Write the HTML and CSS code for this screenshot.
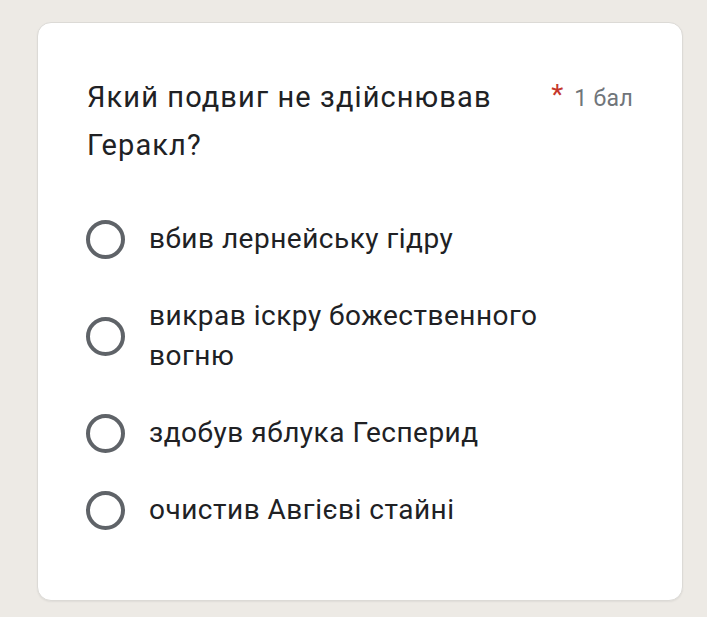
FILE: index.html
```html
<!DOCTYPE html>
<html lang="uk">
<head>
<meta charset="utf-8">
<link rel="stylesheet" href="styles.css">
</head>
<body>
<div class="card">
  <div class="header">
    <div class="title">Який подвиг не здійснював Геракл?</div>
    <div class="meta"><span class="req">*</span><span class="points">1 бал</span></div>
  </div>
  <div class="options">
    <label class="option"><span class="radio"></span><span class="text">вбив лернейську гідру</span></label>
    <label class="option"><span class="radio"></span><span class="text">викрав іскру божественного вогню</span></label>
    <label class="option"><span class="radio"></span><span class="text">здобув яблука Гесперид</span></label>
    <label class="option"><span class="radio"></span><span class="text">очистив Авгієві стайні</span></label>
  </div>
</div>
</body>
</html>
```
FILE: styles.css
```css
html, body {
  margin: 0;
  padding: 0;
  background: #edeae5;
  font-family: Roboto, "Noto Sans", sans-serif;
}
body {
  padding: 22px 24px 16px 37px;
}
.card {
  box-sizing: border-box;
  width: 646px;
  height: 579px;
  background: #fff;
  border: 1px solid #dcdad6;
  border-radius: 14px;
  box-shadow: 0 1px 2px rgba(0,0,0,0.06);
  padding: 50px 49px 0 48px;
}
.header {
  display: flex;
  align-items: flex-start;
}
.title {
  width: 440px;
  margin-left: 1px;
  font-size: 29px;
  letter-spacing: 1.1px;
  line-height: 48px;
  color: #202124;
}
.meta {
  margin-left: auto;
  display: flex;
  align-items: baseline;
  line-height: 48px;
}
.req {
  color: #c5372c;
  font-size: 28px;
  margin-right: 11px;
  position: relative;
  top: -2px;
}
.points {
  color: #70757a;
  font-size: 23px;
  letter-spacing: 0.3px;
}
.options {
  margin-top: 50px;
  display: flex;
  flex-direction: column;
  gap: 37px;
}
.option {
  display: flex;
  align-items: center;
}
.radio {
  flex: none;
  box-sizing: border-box;
  width: 39px;
  height: 39px;
  border: 4px solid #5f6368;
  border-radius: 50%;
  margin-right: 24px;
}
.text {
  font-size: 28px;
  letter-spacing: 0.5px;
  line-height: 40px;
  color: #202124;
  max-width: 430px;
}
```
